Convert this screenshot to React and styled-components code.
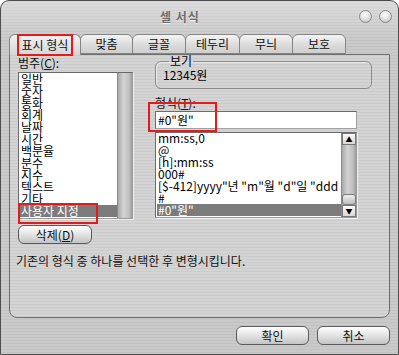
import styled, { createGlobalStyle } from "styled-components"

const GlobalStyle = createGlobalStyle`
  body {
    margin: 0;
    background: #fff;
  }
  * {
    box-sizing: border-box;
  }
`

const Window = styled.div`
  width: 399px;
  height: 355px;
  display: flex;
  flex-direction: column;
  border: 1px solid #4d4d4d;
  border-radius: 9px 9px 0 0;
  overflow: hidden;
  background:
    linear-gradient(rgba(255, 255, 255, 0.35), rgba(255, 255, 255, 0) 40px),
    repeating-linear-gradient(to bottom, #c2c2c2 0px, #c2c2c2 1px, #cacaca 1px, #cacaca 3px);
  font-family: "Noto Sans CJK KR", "Noto Sans", sans-serif;
  font-size: 12px;
  color: #000;
`

const TitleBar = styled.div`
  height: 30px;
  display: flex;
  align-items: center;
  padding-right: 6px;
`

const Title = styled.div`
  flex: 1;
  text-align: center;
  font-weight: bold;
  font-size: 12px;
  color: #6b6b6b;
  text-shadow: 0 1px 0 #f4f4f4;
  letter-spacing: 1px;
`

const Controls = styled.div`
  display: flex;
  gap: 7px;
`

const Knob = styled.span`
  width: 13px;
  height: 13px;
  border-radius: 50%;
  border: 1px solid #8c8c8c;
  background: radial-gradient(circle at 45% 35%, #ffffff 0%, #dcdcdc 55%, #b5b5b5 100%);
`

const TabRow = styled.div`
  display: flex;
  padding-left: 8px;
  margin-top: 3px;
  height: 20px;
  position: relative;
  z-index: 1;
`

const Tab = styled.div`
  width: ${(p) => p.$w}px;
  height: ${(p) => (p.$active ? 21 : 20)}px;
  margin-right: -1px;
  display: flex;
  align-items: center;
  justify-content: center;
  border: 1px solid #858585;
  border-bottom: ${(p) => (p.$active ? "none" : "1px solid #858585")};
  border-radius: 6px 6px 0 0;
  background: ${(p) =>
    p.$active
      ? "linear-gradient(#f2f2f2, #d6d6d6)"
      : "linear-gradient(#f4f4f4, #d9d9d9 60%, #cfcfcf)"};
  color: #111;
  line-height: 14px;
`

const Highlight = styled.span`
  position: relative;
  display: inline-block;
  &::after {
    content: "";
    position: absolute;
    inset: ${(p) => p.$inset};
    border: 2px solid #e41b1b;
    pointer-events: none;
  }
`

const Panel = styled.div`
  margin: 0 8px;
  height: 264px;
  display: flex;
  flex-direction: column;
  border: 1px solid #6e6e6e;
  border-radius: 0 0 8px 8px;
  background: repeating-linear-gradient(to bottom, #cbcbcb 0px, #cbcbcb 1px, #d4d4d4 1px, #d4d4d4 3px);
`

const Columns = styled.div`
  display: grid;
  grid-template-columns: 137px 1fr;
`

const LeftCol = styled.div`
  display: flex;
  flex-direction: column;
  align-items: flex-start;
  padding: 1px 0 0 8px;
`

const RightCol = styled.div`
  display: flex;
  flex-direction: column;
  padding: 0 17px 0 8px;
`

const Label = styled.div`
  line-height: 13px;
  height: 13px;
  color: #111;
  margin-top: ${(p) => p.$mt || 0}px;
`

const ListBox = styled.div`
  display: flex;
  width: ${(p) => p.$w}px;
  height: ${(p) => p.$h}px;
  margin-top: ${(p) => p.$mt || 0}px;
  border: 1px solid #6a6a6a;
  border-right-color: #9a9a9a;
  border-bottom-color: #9a9a9a;
  box-shadow: 1px 1px 0 #f0f0f0;
  background: #fff;
`

const Rows = styled.div`
  flex: 1;
  min-width: 0;
  display: flex;
  flex-direction: column;
  justify-content: ${(p) => (p.$end ? "flex-end" : "flex-start")};
  padding: 0 0 1px 1px;
`

const Row = styled.div`
  height: 12px;
  line-height: 12px;
  white-space: nowrap;
  overflow-x: ${(p) => (p.$clip ? "clip" : "visible")};
  overflow-y: visible;
  padding-left: 1px;
  color: ${(p) => (p.$sel ? "#fff" : "#000")};
  background: ${(p) => (p.$sel ? "#7b7b7b" : "transparent")};
`

const EmptyTrack = styled.div`
  width: 15px;
  border-left: 1px solid #8a8a8a;
  background: linear-gradient(to right, #a9a9a9, #d4d4d4 40%, #bfbfbf 80%, #9d9d9d);
`

const ScrollBar = styled.div`
  width: 15px;
  flex-shrink: 0;
  display: flex;
  flex-direction: column;
  border-left: 1px solid #8a8a8a;
`

const ScrollBtn = styled.div`
  height: 12px;
  display: flex;
  align-items: center;
  justify-content: center;
  font-size: 7px;
  color: #000;
  border: 1px solid #777;
  background: linear-gradient(#fbfbfb, #d8d8d8);
`

const Track = styled.div`
  flex: 1;
  display: flex;
  flex-direction: column;
  justify-content: flex-end;
  background: linear-gradient(to right, #a9a9a9, #d2d2d2 40%, #bdbdbd 80%, #9d9d9d);
`

const Thumb = styled.div`
  height: 11px;
  border: 1px solid #7a7a7a;
  border-radius: 3px;
  background: linear-gradient(#f0f0f0, #bdbdbd);
`

const Button = styled.button`
  width: ${(p) => p.$w}px;
  height: 19px;
  padding: 0;
  border: 1px solid #5a5a5a;
  border-radius: 6px;
  background: linear-gradient(#ffffff, #e6e6e6 45%, #c4c4c4);
  font-family: inherit;
  font-size: 12px;
  line-height: 15px;
  color: #111;
  margin-top: ${(p) => p.$mt || 0}px;
`

const Group = styled.fieldset`
  margin: 0;
  height: 34px;
  padding: 0 7px;
  border: 1px solid #8a8a8a;
  border-radius: 6px;
  box-shadow: inset 1px 1px 0 #eaeaea;
  width: 217px;
`

const Legend = styled.legend`
  padding: 0 1px;
  margin-left: 6px;
  line-height: 12px;
`

const Value = styled.div`
  line-height: 14px;
  padding-top: 1px;
`

const FormatInput = styled.div`
  width: 202px;
  height: 18px;
  margin-top: 2px;
  padding-left: 2px;
  line-height: 16px;
  background: #fff;
  border: 1px solid #6a6a6a;
  border-right-color: #a0a0a0;
  border-bottom-color: #a0a0a0;
`

const Description = styled.div`
  padding: 10px 0 0 6px;
  line-height: 14px;
  color: #111;
`

const Footer = styled.div`
  display: flex;
  justify-content: flex-end;
  gap: 8px;
  padding: 8px 8px 0 0;
`

const categories = ["일반", "숫자", "통화", "회계", "날짜", "시간", "백분율", "분수", "지수", "텍스트", "기타"]
const formats = ["mm:ss,0", "@", "[h]:mm:ss", "000#", '[$-412]yyyy"년 "m"월 "d"일 "ddd', "#"]
const tabs = [
  ["표시 형식", 72],
  ["맞춤", 53],
  ["글꼴", 54],
  ["테두리", 55],
  ["무늬", 54],
  ["보호", 54],
]

const App = () => {
  return (
    <Window>
      <GlobalStyle />
      <TitleBar>
        <Title>셀 서식</Title>
        <Controls>
          <Knob />
          <Knob />
        </Controls>
      </TitleBar>
      <TabRow>
        {tabs.map(([name, w], i) => (
          <Tab key={name} $w={w} $active={i === 0}>
            {i === 0 ? <Highlight $inset="-4px -5px -4px -5px">{name}</Highlight> : name}
          </Tab>
        ))}
      </TabRow>
      <Panel>
        <Columns>
          <LeftCol>
            <Label>범주(<u>C</u>):</Label>
            <ListBox $w={115} $h={147} $mt={3}>
              <Rows>
                {categories.map((c) => (
                  <Row key={c}>{c}</Row>
                ))}
                <Row $sel>
                  <Highlight $inset="-2px -19px -7px -3px">사용자 지정</Highlight>
                </Row>
              </Rows>
              <EmptyTrack />
            </ListBox>
            <Button $w={74} $mt={6}>삭제(<u>D</u>)</Button>
          </LeftCol>
          <RightCol>
            <Group>
              <Legend>보기</Legend>
              <Value>12345원</Value>
            </Group>
            <Label $mt={7}>형식(<u>T</u>):</Label>
            <FormatInput>
              <Highlight $inset="-10px -23px -4px -10px">#0"원"</Highlight>
            </FormatInput>
            <ListBox $w={202} $h={86} $mt={3}>
              <Rows $end>
                {formats.map((f) => (
                  <Row key={f} $clip={f.length > 20}>{f}</Row>
                ))}
                <Row $sel>#0"원"</Row>
              </Rows>
              <ScrollBar>
                <ScrollBtn>▲</ScrollBtn>
                <Track>
                  <Thumb />
                </Track>
                <ScrollBtn>▼</ScrollBtn>
              </ScrollBar>
            </ListBox>
          </RightCol>
        </Columns>
        <Description>기존의 형식 중 하나를 선택한 후 변형시킵니다.</Description>
      </Panel>
      <Footer>
        <Button $w={73}>확인</Button>
        <Button $w={73}>취소</Button>
      </Footer>
    </Window>
  )
}

export default App
